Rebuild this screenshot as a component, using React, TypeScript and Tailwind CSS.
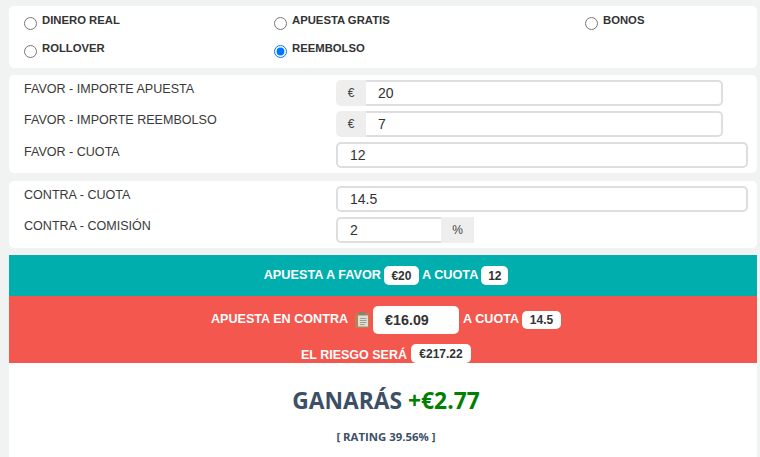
import React from "react";

const sans = "font-['Liberation_Sans',Arial,sans-serif]";

function Radio({ label, checked, className }: { label: string; checked?: boolean; className?: string }) {
  return (
    <label className={`flex items-start ${className ?? ""}`}>
      <input type="radio" name="kind" defaultChecked={checked} className="m-0 mt-[4px] w-[13px] h-[13px] accent-[#0075ff]" />
      <span className="ml-[5px] text-[11.3px] leading-[14px] font-bold text-[#333]">{label}</span>
    </label>
  );
}

function Row({ label, children, labelClass }: { label: string; children: React.ReactNode; labelClass: string }) {
  return (
    <div className="flex">
      <div className={`w-[312px] text-[12.55px] leading-[16px] text-[#3a3a3a] ${labelClass}`}>{label}</div>
      {children}
    </div>
  );
}

function Field({ value, className }: { value: string; className?: string }) {
  return (
    <input
      readOnly
      value={value}
      className={`h-[26px] px-[12px] bg-white border border-[#dedede] text-[14px] text-[#333] outline-none ${className ?? ""}`}
    />
  );
}

function Addon({ children, className }: { children: React.ReactNode; className?: string }) {
  return (
    <span className={`flex items-center justify-center bg-[#eeeeee] text-[12px] text-[#444] ${className ?? ""}`}>
      {children}
    </span>
  );
}

function Pill({ children, className }: { children: React.ReactNode; className?: string }) {
  return (
    <span className={`inline-flex items-center justify-center bg-white rounded-[5px] text-[#333] font-bold ${className ?? ""}`}>
      {children}
    </span>
  );
}

export default function App() {
  return (
    <div className={`h-[457px] w-[760px] overflow-hidden bg-[#f1f3f3] pl-[9px] pr-[3px] pt-[6px] ${sans}`}>
      <div className="h-[62px] bg-white rounded-[5px] pl-[15px] pt-[7px] grid grid-cols-[250px_311px_1fr] grid-rows-[28px_28px]">
        <Radio label="DINERO REAL" />
        <Radio label="APUESTA GRATIS" />
        <Radio label="BONOS" />
        <Radio label="ROLLOVER" />
        <Radio label="REEMBOLSO" checked />
      </div>

      <div className="mt-[7px] h-[98px] bg-white rounded-[5px] pl-[15px] pt-[5px] flex flex-col gap-[5px]">
        <Row label="FAVOR - IMPORTE APUESTA" labelClass="pt-[1px]">
          <div className="flex">
            <Addon className="w-[30px] h-[26px] rounded-l-[5px]">€</Addon>
            <Field value="20" className="w-[357px] rounded-r-[5px] border-2 border-l-0" />
          </div>
        </Row>
        <Row label="FAVOR - IMPORTE REEMBOLSO" labelClass="pt-[1px]">
          <div className="flex">
            <Addon className="w-[30px] h-[26px] rounded-l-[5px]">€</Addon>
            <Field value="7" className="w-[357px] rounded-r-[5px] border-2 border-l-0" />
          </div>
        </Row>
        <Row label="FAVOR - CUOTA" labelClass="pt-[2px]">
          <Field value="12" className="w-[412px] rounded-[5px] border-2" />
        </Row>
      </div>

      <div className="mt-[8px] h-[67px] bg-white rounded-[5px] pl-[15px] pt-[5px] flex flex-col gap-[5px]">
        <Row label="CONTRA - CUOTA" labelClass="pt-[1px]">
          <Field value="14.5" className="w-[412px] rounded-[5px] border-2" />
        </Row>
        <Row label="CONTRA - COMISIÓN" labelClass="pt-[1px]">
          <div className="flex">
            <Field value="2" className="w-[105px] rounded-l-[5px] border-2 border-r-0" />
            <Addon className="w-[33px] h-[26px]">%</Addon>
          </div>
        </Row>
      </div>

      <div className="mt-[7px] h-[41px] bg-[#00aeae] flex items-center justify-center gap-[3px] pl-[6px] text-white font-bold text-[12.7px]">
        <span>APUESTA A FAVOR</span>
        <Pill className="w-[35px] h-[19px] text-[12px]">€20</Pill>
        <span>A CUOTA</span>
        <Pill className="w-[27px] h-[19px] text-[12px]">12</Pill>
      </div>

      <div className="h-[67px] bg-[#f4574e] flex flex-col items-center text-white font-bold text-[12.6px]">
        <div className="h-[48px] flex items-center pl-[6px]">
          <span className="mb-[2px]">APUESTA EN CONTRA</span>
          <svg viewBox="0 0 15 16" className="w-[15px] h-[16px] ml-[7px]">
            <rect x="0" y="1.5" width="14" height="14.5" rx="1" fill="#b5854f" />
            <rect x="3" y="3.5" width="10" height="11" fill="#dfdfd8" />
            <path d="M5 6.5h6.5M5 8.5h6.5M5 10.5h6.5M5 12.5h4.5" stroke="#9f9f98" strokeWidth="1" />
            <rect x="3.5" y="0" width="7" height="3" rx="1" fill="#85827c" />
          </svg>
          <input
            readOnly
            value="€16.09"
            className="ml-[3px] w-[86px] h-[28px] rounded-[5px] bg-white px-[12px] text-[14.3px] font-bold text-[#333] outline-none"
          />
          <span className="ml-[4px] mb-[2px]">A CUOTA</span>
          <Pill className="ml-[3px] w-[39px] h-[18px] text-[12px]">14.5</Pill>
        </div>
        <div className="flex items-start h-[19px] pl-[6px]">
          <span className="mt-[2px] text-[12.5px]">EL RIESGO SERÁ</span>
          <Pill className="ml-[4px] w-[60px] h-[19px] text-[12px]">€217.22</Pill>
        </div>
      </div>

      <div className="h-[94px] bg-white flex flex-col items-center pl-[6px] font-['Open_Sans',sans-serif]">
        <div className="mt-[22px] text-[22.8px] leading-[32px] font-bold text-[#3d4f66]">
          GANARÁS <span className="text-[#008000]">+€2.77</span>
        </div>
        <div className="mt-[13px] text-[11.4px] leading-[14px] font-bold text-[#3d4f66]">[ RATING 39.56% ]</div>
      </div>
    </div>
  );
}
